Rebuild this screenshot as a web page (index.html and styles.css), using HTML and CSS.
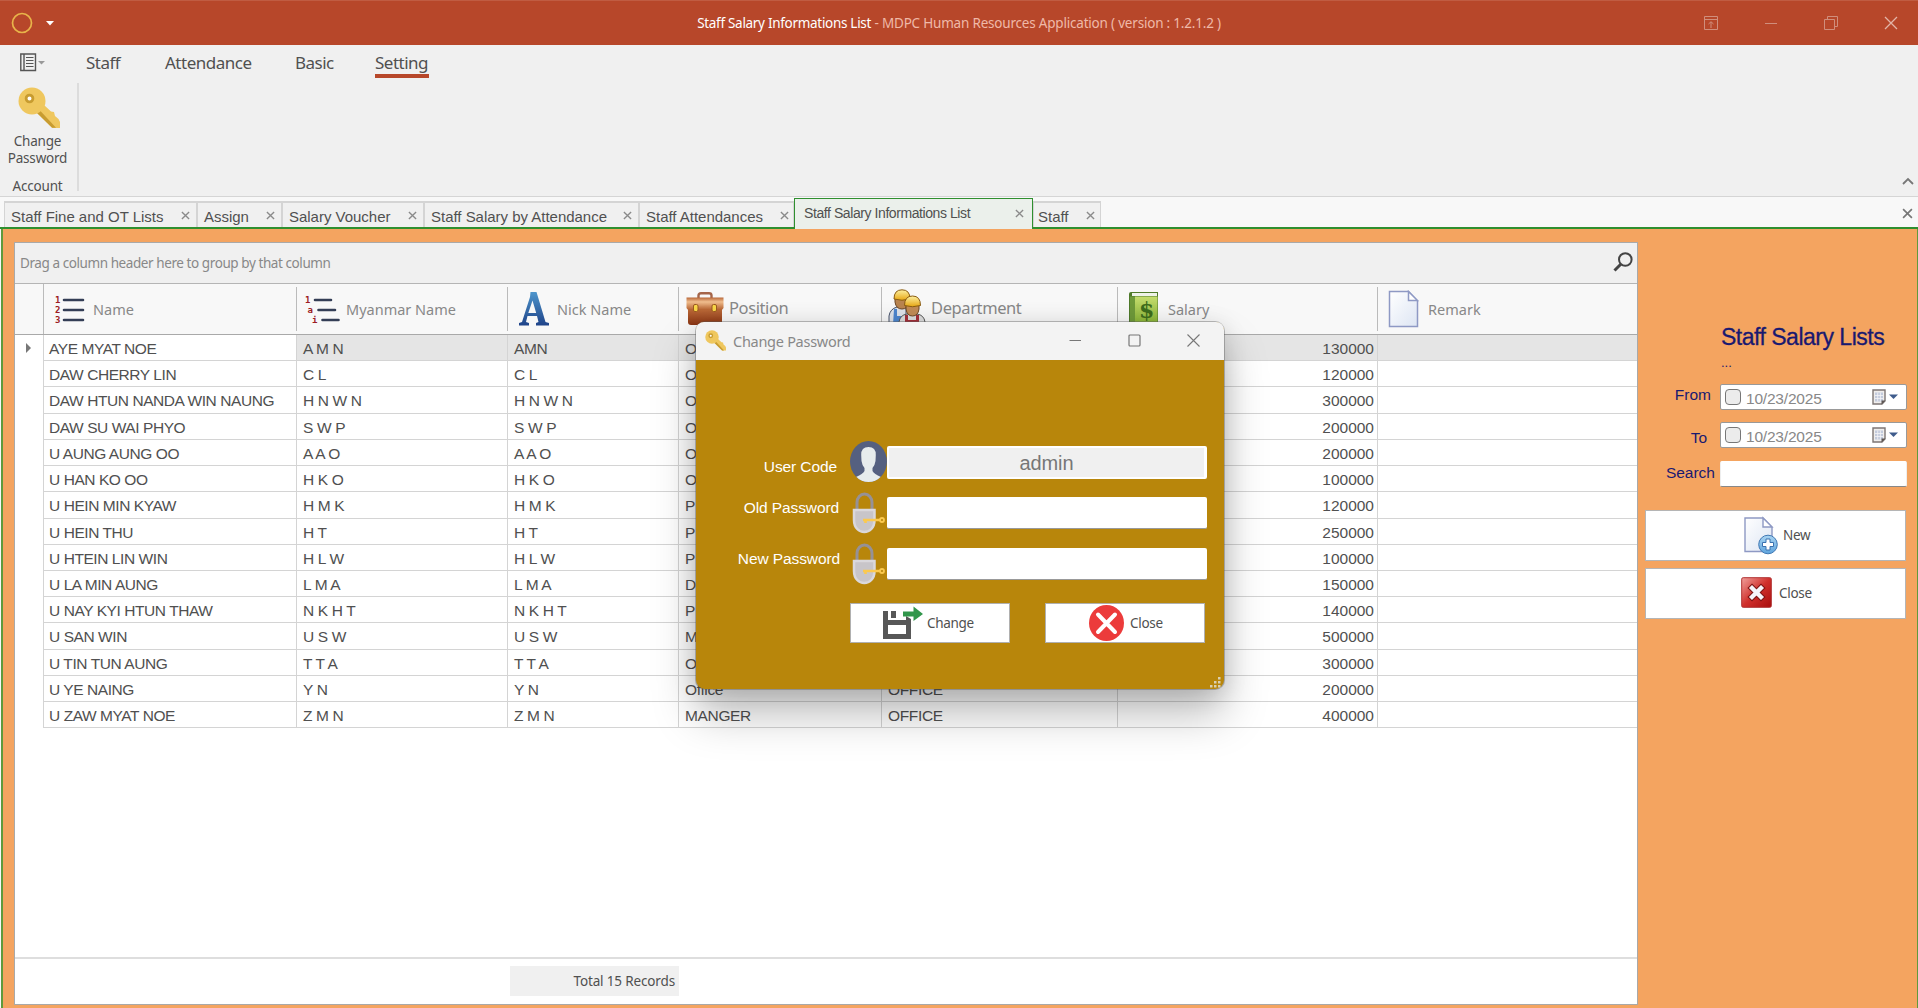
FILE: index.html
```html
<!DOCTYPE html>
<html lang="en">
<head>
<meta charset="utf-8">
<title>Staff Salary Informations List</title>
<link rel="stylesheet" href="styles.css">
</head>
<body>
<svg class="defs" width="0" height="0" aria-hidden="true">
  <defs>
    <linearGradient id="gBlue" x1="0" y1="0" x2="0" y2="1"><stop offset="0" stop-color="#4e96cc"/><stop offset="1" stop-color="#1f4389"/></linearGradient>
    <linearGradient id="gBag" x1="0" y1="0" x2="0" y2="1"><stop offset="0" stop-color="#c87843"/><stop offset="1" stop-color="#8a3413"/></linearGradient>
    <linearGradient id="gFlap" x1="0" y1="0" x2="0" y2="1"><stop offset="0" stop-color="#b9683a"/><stop offset=".35" stop-color="#f0bd8d"/><stop offset="1" stop-color="#b5612f"/></linearGradient>
    <linearGradient id="gHat" x1="0" y1="0" x2="0" y2="1"><stop offset="0" stop-color="#fdf0a0"/><stop offset="1" stop-color="#e7a714"/></linearGradient>
    <linearGradient id="gGreen" x1="0" y1="0" x2="0" y2="1"><stop offset="0" stop-color="#c5dc6e"/><stop offset="1" stop-color="#7fae2e"/></linearGradient>
    <linearGradient id="gDoc" x1="0" y1="0" x2="1" y2="1"><stop offset="0" stop-color="#ffffff"/><stop offset="1" stop-color="#dde5f3"/></linearGradient>
    <linearGradient id="gPlus" x1="0" y1="0" x2="0" y2="1"><stop offset="0" stop-color="#a9d4f2"/><stop offset="1" stop-color="#5fa4dc"/></linearGradient>
    <linearGradient id="gRed" x1="0" y1="0" x2="1" y2="1"><stop offset="0" stop-color="#f0a09c"/><stop offset=".5" stop-color="#d0302c"/><stop offset="1" stop-color="#a80c0c"/></linearGradient>
    <symbol id="key" viewBox="0 0 42 42">
      <path d="M20 23 26 18 33 24.5 36 25 37 29 40.5 32 42 35V41L34.500 41 19 26Z" fill="#efc75e"/>
      <path d="M19 26 22 23.500 38 40.800H34Z" fill="#c89c30"/>
      <circle cx="14" cy="14" r="13.500" fill="#efc75e"/>
      <circle cx="11.500" cy="11.500" r="3.400" fill="#fff" stroke="#c89c30" stroke-width="2.800"/>
    </symbol>
    <symbol id="x" viewBox="0 0 10 10"><path d="M1 1 9 9M9 1 1 9" fill="none" stroke="currentColor" stroke-width="1.500"/></symbol>
    <symbol id="lock" viewBox="0 0 33 42">
      <path d="M5 18V10.500A7.500 8.500 0 0 1 20 10.500V18" fill="none" stroke="#969196" stroke-width="3"/>
      <path d="M2 18H22.500V28C22.500 36 17.500 40 12.300 40S2 36 2 28Z" fill="#c8c5c9" stroke="#dad8dc" stroke-width="2.500"/>
      <path d="M11 28H28M13.500 28V31" fill="none" stroke="#fbc94f" stroke-width="2.600"/>
      <circle cx="30" cy="28" r="2" fill="none" stroke="#fbc94f" stroke-width="1.800"/>
    </symbol>
    <symbol id="doc" viewBox="0 0 31 38">
      <path d="M1.500 1.500H20.500L29.500 11V36.500H1.500Z" fill="url(#gDoc)" stroke="#8e99c4" stroke-width="1.500"/>
      <path d="M20.500 1.500V10.500H29.500Z" fill="#fff" stroke="#8e99c4" stroke-width="1.500"/>
    </symbol>
    <symbol id="cal" viewBox="0 0 26 16">
      <path d="M1 1H13V12L10 15H1Z" fill="#f0eeec" stroke="#7d7674" stroke-width="1.400"/>
      <path d="M3 3.500H11V12.500H3Z" fill="#c3cbdc"/>
      <path d="M3 6.500H11M3 9.500H11M5.700 3.500V12.500M8.400 3.500V12.500" fill="none" stroke="#f4f4f6" stroke-width=".8"/>
      <path d="M9.500 15.500V11.500H13.500Z" fill="#5d5654"/>
      <path d="M17 5.500H26L21.500 10Z" fill="#3f5c8c"/>
    </symbol>
  </defs>
</svg>

<header class="titlebar">
  <div class="quick">
    <svg width="22" height="22" viewBox="0 0 22 22"><circle cx="11" cy="11" r="9.500" fill="none" stroke="#e8b44a" stroke-width="1.700"/></svg>
    <svg width="8" height="5" viewBox="0 0 8 5"><path d="M0 0H8L4 4.500Z" fill="#fff"/></svg>
  </div>
  <div class="caption"><span class="doc-name">Staff Salary Informations List</span> <span class="app-name">- MDPC Human Resources Application ( version : 1.2.1.2 )</span></div>
  <div class="controls">
    <svg width="14" height="14" viewBox="0 0 14 14"><path d="M.5.5H13.500V13.500H.5ZM.5 3.500H13.500M7 12V6M4.500 8 7 5.700 9.500 8" fill="none" stroke="currentColor"/></svg>
    <svg width="14" height="14" viewBox="0 0 14 14"><path d="M1 7.500H13" stroke="currentColor"/></svg>
    <svg width="14" height="14" viewBox="0 0 14 14"><path d="M.5 3.500H10.500V13.500H.5ZM3.500 3.500V.5H13.500V10.500H10.500" fill="none" stroke="currentColor"/></svg>
    <svg class="bright" width="14" height="14" viewBox="0 0 14 14"><path d="M1 1 13 13M13 1 1 13" fill="none" stroke="currentColor" stroke-width="1.300"/></svg>
  </div>
</header>

<section class="ribbon">
  <nav class="ribbon-tabs">
    <svg class="file" width="26" height="19" viewBox="0 0 26 19"><path d="M.8 1H15.500V17.500H.8ZM4 1V17.500" fill="none" stroke="#555" stroke-width="1.400"/><path d="M6 4.500H13.500M6 7.500H13.500M6 10.500H13.500M6 13.500H13.500" stroke="#555" stroke-width="1.200"/><path d="M18 8H25L21.500 11.500Z" fill="#999"/></svg>
    <a class="t1">Staff</a><a class="t2">Attendance</a><a class="t3">Basic</a><a class="t4 on">Setting</a>
  </nav>
  <div class="ribbon-body">
    <div class="group">
      <svg width="42" height="42"><use href="#key"/></svg>
      <div class="cmd">Change<br>Password</div>
      <div class="gname">Account</div>
    </div>
    <svg class="collapse" width="12" height="8" viewBox="0 0 12 8"><path d="M1 7 6 2 11 7" fill="none" stroke="#777" stroke-width="1.800"/></svg>
  </div>
</section>

<nav class="tabs">
  <div class="tab w1"><span>Staff Fine and OT Lists</span><svg width="9" height="9"><use href="#x"/></svg></div>
  <div class="tab w2"><span>Assign</span><svg width="9" height="9"><use href="#x"/></svg></div>
  <div class="tab w3"><span>Salary Voucher</span><svg width="9" height="9"><use href="#x"/></svg></div>
  <div class="tab w4"><span>Staff Salary by Attendance</span><svg width="9" height="9"><use href="#x"/></svg></div>
  <div class="tab w5"><span>Staff Attendances</span><svg width="9" height="9"><use href="#x"/></svg></div>
  <div class="tab w6 active"><span>Staff Salary Informations List</span><svg width="9" height="9"><use href="#x"/></svg></div>
  <div class="tab w7"><span>Staff</span><svg width="9" height="9"><use href="#x"/></svg></div>
  <svg class="close-all" width="11" height="11"><use href="#x"/></svg>
</nav>

<main class="page">
  <section class="grid">
    <div class="group-panel"><span>Drag a column header here to group by that column</span>
      <svg width="20" height="20" viewBox="0 0 20 20"><circle cx="12.300" cy="7.500" r="6.300" fill="none" stroke="#444" stroke-width="2"/><path d="M8 12 1.500 18.500" stroke="#444" stroke-width="3"/></svg>
    </div>
    <div class="row head">
      <div class="ind"></div>
      <div class="h c-name"><svg width="32" height="30" viewBox="0 0 32 30"><g class="num"><text x="1" y="8.500">1</text><text x="1" y="18.500">2</text><text x="1" y="28.500">3</text></g><path d="M10 6H29M10 16H29M10 26H29" stroke="#343e56" stroke-width="2.600" stroke-linecap="round"/></svg><span>Name</span></div>
      <div class="h c-my"><svg width="36" height="30" viewBox="0 0 36 30"><g class="num"><text x="0" y="8.500">1</text><text x="2.500" y="18.500">a</text><text x="7" y="28.500">i</text></g><path d="M10 6H26M13.500 16H30M17.500 26H33.500" stroke="#343e56" stroke-width="2.600" stroke-linecap="round"/></svg><span>Myanmar Name</span></div>
      <div class="h c-nick"><svg width="32" height="36" viewBox="0 0 32 36"><path d="M12.500 1H18.500L27.500 31 31 32V34.500H18V32L20.500 31 19 25H9.500L8 31 11 32V34.500H1V32L4 31 12 6ZM14.500 9.500 10.300 22H18.200Z" fill="url(#gBlue)" fill-rule="evenodd"/></svg><span>Nick Name</span></div>
      <div class="h c-pos big"><svg width="38" height="34" viewBox="0 0 38 34"><path d="M12.500 6V3.500Q12.500 1.300 15 1.300H23Q25.500 1.300 25.500 3.500V6" fill="none" stroke="#a5654a" stroke-width="2.400"/><path d="M2 13H36V30Q36 33 33 33H5Q2 33 2 30Z" fill="url(#gBag)"/><path d="M.5 5.500H37.500V16Q37 18 34 18H4Q1 18 .5 16Z" fill="url(#gFlap)"/><rect x="7.500" y="12.500" width="4.500" height="7" rx="1.500" fill="#f9d648" stroke="#9a5a20"/><rect x="26" y="12.500" width="4.500" height="7" rx="1.500" fill="#f9d648" stroke="#9a5a20"/></svg><span>Position</span></div>
      <div class="h c-dep big"><svg width="38" height="40" viewBox="0 0 38 40"><path d="M1 36V27Q2 20 9 18H18V36Z" fill="#dfe3ea" stroke="#46536b"/><path d="M6 20H9V27H16V36H5Z" fill="#4d86cf"/><path d="M7 8H21V13Q20 20 14 20T7 13Z" fill="#b98450" stroke="#6d4522" stroke-width="1"/><path d="M6 10Q6 .8 14 .8T22 10Q14 12.500 6 10Z" fill="url(#gHat)" stroke="#8a5c12" stroke-width="1"/><path d="M11 40V33Q12 26 19 25H29Q36 26 37 33V40Z" fill="#ddd" stroke="#555"/><path d="M17 26H20V31H28V26H31V40H17Z" fill="#a5303a"/><path d="M18 15H31V20Q30 27 24.500 27T18 20Z" fill="#c28c56" stroke="#6d4522" stroke-width="1"/><path d="M16.500 16.500Q16.500 7 24.500 7T32.500 16.500Q24.500 19 16.500 16.500Z" fill="url(#gHat)" stroke="#8a5c12" stroke-width="1"/></svg><span>Department</span></div>
      <div class="h c-sal"><svg width="31" height="36" viewBox="0 0 31 36"><path d="M1 3Q1 1 3 1H30V36H1Z" fill="#4f7a2a"/><path d="M4 2H29V5H4Z" fill="#eef2e8"/><path d="M7 5.500H29.500V36H7Z" fill="url(#gGreen)"/><path d="M2 5.500H7V36H2Z" fill="#6f9a3a"/><text class="dollar" x="11" y="27">$</text></svg><span>Salary</span></div>
      <div class="h c-rem"><svg width="31" height="38"><use href="#doc"/></svg><span>Remark</span></div>
    </div>
    <div class="row sel"><i class="ind"><svg width="5" height="10" viewBox="0 0 5 10"><path d="M0 0 5 5 0 10Z" fill="#777"/></svg></i><b>AYE MYAT NOE</b><b>A M N</b><b>AMN</b><b>Office</b><b>OFFICE</b><b>130000</b><b></b></div>
    <div class="row"><i class="ind"></i><b>DAW CHERRY LIN</b><b>C L</b><b>C L</b><b>Office</b><b>OFFICE</b><b>120000</b><b></b></div>
    <div class="row"><i class="ind"></i><b>DAW HTUN NANDA WIN NAUNG</b><b>H N W N</b><b>H N W N</b><b>Office</b><b>OFFICE</b><b>300000</b><b></b></div>
    <div class="row"><i class="ind"></i><b>DAW SU WAI PHYO</b><b>S W P</b><b>S W P</b><b>Office</b><b>OFFICE</b><b>200000</b><b></b></div>
    <div class="row"><i class="ind"></i><b>U AUNG AUNG OO</b><b>A A O</b><b>A A O</b><b>Office</b><b>OFFICE</b><b>200000</b><b></b></div>
    <div class="row"><i class="ind"></i><b>U HAN KO OO</b><b>H K O</b><b>H K O</b><b>Office</b><b>OFFICE</b><b>100000</b><b></b></div>
    <div class="row"><i class="ind"></i><b>U HEIN MIN KYAW</b><b>H M K</b><b>H M K</b><b>P</b><b></b><b>120000</b><b></b></div>
    <div class="row"><i class="ind"></i><b>U HEIN THU</b><b>H T</b><b>H T</b><b>P</b><b></b><b>250000</b><b></b></div>
    <div class="row"><i class="ind"></i><b>U HTEIN LIN WIN</b><b>H L W</b><b>H L W</b><b>P</b><b></b><b>100000</b><b></b></div>
    <div class="row"><i class="ind"></i><b>U LA MIN AUNG</b><b>L M A</b><b>L M A</b><b>D</b><b></b><b>150000</b><b></b></div>
    <div class="row"><i class="ind"></i><b>U NAY KYI HTUN THAW</b><b>N K H T</b><b>N K H T</b><b>P</b><b></b><b>140000</b><b></b></div>
    <div class="row"><i class="ind"></i><b>U SAN WIN</b><b>U S W</b><b>U S W</b><b>M</b><b></b><b>500000</b><b></b></div>
    <div class="row"><i class="ind"></i><b>U TIN TUN AUNG</b><b>T T A</b><b>T T A</b><b>Office</b><b>OFFICE</b><b>300000</b><b></b></div>
    <div class="row"><i class="ind"></i><b>U YE NAING</b><b>Y N</b><b>Y N</b><b>Office</b><b>OFFICE</b><b>200000</b><b></b></div>
    <div class="row"><i class="ind"></i><b>U ZAW MYAT NOE</b><b>Z M N</b><b>Z M N</b><b>MANGER</b><b>OFFICE</b><b>400000</b><b></b></div>
    <footer class="summary"><span>Total 15 Records</span></footer>
  </section>

  <aside class="side">
    <h1>Staff Salary Lists</h1>
    <div class="dots">...</div>
    <div class="field f1"><label>From</label><div class="date"><i class="check"></i><span>10/23/2025</span><svg width="26" height="16"><use href="#cal"/></svg></div></div>
    <div class="field f2"><label>To</label><div class="date"><i class="check"></i><span>10/23/2025</span><svg width="26" height="16"><use href="#cal"/></svg></div></div>
    <div class="field f3"><label>Search</label><div class="search"></div></div>
    <div class="btn b1"><svg width="34" height="38" viewBox="0 0 34 38"><path d="M1 1H19L28 10V34.500H1Z" fill="url(#gDoc)" stroke="#8e99c4" stroke-width="1.400"/><path d="M19 1V10H28Z" fill="#fff" stroke="#8e99c4" stroke-width="1.400"/><circle cx="24" cy="27.500" r="9.300" fill="url(#gPlus)" stroke="#3f78b4"/><path d="M22 22H26V25.500H29.500V29.500H26V33H22V29.500H18.500V25.500H22Z" fill="#fff" stroke="#3a72b0"/></svg><span>New</span></div>
    <div class="btn b2"><svg width="31" height="31" viewBox="0 0 31 31"><rect x=".7" y=".7" width="29.600" height="29.600" rx="1.500" fill="url(#gRed)" stroke="#b03030" stroke-width="1"/><path d="M11 11 20 20M20 11 11 20" stroke="#7d1414" stroke-width="6.500" stroke-linecap="square"/><path d="M11 11 20 20M20 11 11 20" stroke="#f5f5fa" stroke-width="4.300" stroke-linecap="square"/></svg><span>Close</span></div>
  </aside>
</main>

<section class="dialog">
  <header class="dlg-title">
    <svg width="21" height="21"><use href="#key"/></svg><span>Change Password</span>
    <div class="dlg-ctl">
      <svg width="13" height="13" viewBox="0 0 13 13"><path d="M.5 6.500H12" stroke="#777"/></svg>
      <svg width="13" height="13" viewBox="0 0 13 13"><rect x="1" y="1" width="11" height="11" rx="1" fill="none" stroke="#777" stroke-width="1.200"/></svg>
      <svg width="13" height="13" viewBox="0 0 13 13"><path d="M.5.5 12.500 12.500M12.500.5.5 12.500" fill="none" stroke="#777" stroke-width="1.100"/></svg>
    </div>
  </header>
  <div class="dlg-body">
    <label class="l1">User Code</label>
    <svg width="37" height="41" viewBox="0 0 37 41" preserveAspectRatio="none"><defs><clipPath id="av"><ellipse cx="18.500" cy="20.500" rx="18.500" ry="20.500"/></clipPath></defs><g clip-path="url(#av)"><path d="M0 0H37V41H0Z" fill="#556080"/><path d="M18.500 6Q26 6 25.800 14L25.500 20Q25 24 22.500 27V30Q24 33 31 36L32 41H5L6 36Q13 33 14.500 30V27Q12 24 11.500 20L11.200 14Q11 6 18.500 6Z" fill="#e7eced"/></g></svg>
    <div class="inp ro">admin</div>
    <label class="l2">Old Password</label>
    <svg class="lk" width="33" height="42"><use href="#lock"/></svg>
    <div class="inp"></div>
    <label class="l3">New Password</label>
    <svg class="lk" width="33" height="42"><use href="#lock"/></svg>
    <div class="inp"></div>
  </div>
  <div class="dlg-actions">
    <div class="abtn"><svg width="40" height="34" viewBox="0 0 40 34"><path d="M0 5H5V14H23V10L28 13V33H0ZM5 19V28H23V19Z" fill="#575757" fill-rule="evenodd"/><path d="M8 5H13V12H8Z" fill="#575757"/><path d="M20 5.500H30.500V.5L40 8 30.500 15V10.500H20Z" fill="#31964b"/></svg><span>Change</span></div>
    <div class="abtn"><svg width="35" height="36" viewBox="0 0 35 36"><ellipse cx="17.500" cy="18" rx="17.500" ry="18" fill="#ec3b3b"/><path d="M9 9.500 26 27M26 9.500 9 27" stroke="#fff" stroke-width="4" stroke-linecap="round"/></svg><span>Close</span></div>
  </div>
  <svg class="grip" width="12" height="12" viewBox="0 0 12 12"><path d="M8 1h2.500v2.500H8ZM8 5h2.500v2.500H8ZM8 9h2.500v2.500H8ZM4 5h2.500v2.500H4ZM4 9h2.500v2.500H4ZM0 9h2.500v2.500H0Z" fill="#d9d0b4"/></svg>
</section>
</body>
</html>
```
FILE: styles.css
```css
* { box-sizing: border-box; }
body { margin: 0; width: 1918px; height: 1008px; overflow: hidden; position: relative; display: flex; flex-direction: column; background: #f8f8f8; font-family: "Liberation Sans", Arial, sans-serif; color: #505050; }
svg { display: block; flex: none; overflow: visible; }
.defs { position: absolute; }
span, label, a { white-space: nowrap; }

.titlebar { height: 45px; flex: none; background: #b7472a; border-top: 1px solid #c05c42; display: grid; grid-template-columns: 1fr auto 1fr; align-items: center; font-family: "Noto Sans", sans-serif; }
.quick { display: flex; align-items: center; gap: 13px; padding-left: 11px; }
.caption { font-size: 13.5px; letter-spacing: -.1px; color: #efb9a8; padding-bottom: 1px; }
.doc-name { color: #fff; letter-spacing: -.3px; }
.app-name { letter-spacing: -.2px; }
.controls { display: flex; justify-content: flex-end; gap: 46px; padding-right: 20px; color: #d08e7c; }
.bright { color: #e3b5a8; }

.ribbon { height: 152px; flex: none; background: #f0f0f0; border-bottom: 1px solid #d5d5d5; font-family: "Noto Sans", sans-serif; display: flex; flex-direction: column; }
.ribbon-tabs { height: 38px; display: flex; align-items: flex-start; font-size: 17px; letter-spacing: -.5px; }
.file { margin: 8px 0 0 20px; }
.ribbon-tabs a { margin-top: 5px; height: 28px; line-height: 25px; }
.t1 { margin-left: 40px; width: 79px; }
.t2 { width: 130px; }
.t3 { width: 80px; }
.t4.on { width: 54px; border-bottom: 4px solid #b7472a; }
.ribbon-body { flex: 1; display: flex; justify-content: space-between; align-items: flex-end; padding-bottom: 5px; }
.group { width: 79px; height: 108px; border-right: 2px solid #dcdcdc; display: flex; flex-direction: column; align-items: center; padding-top: 4px; font-size: 13.5px; letter-spacing: -.2px; }
.cmd { margin-top: 4px; line-height: 16.500px; text-align: center; padding-right: 2px; }
.gname { margin-top: 11px; line-height: 18px; padding-right: 2px; }
.collapse { margin: 0 4px 6px 0; }

.tabs { height: 32px; flex: none; display: flex; align-items: flex-end; padding-left: 4px; border-bottom: 2px solid #2f8f2f; position: relative; }
.tab { height: 26px; border: 1px solid #d4d4d4; border-width: 2px 1px 0; background: #f0f0f0; display: flex; align-items: center; justify-content: space-between; padding: 2px 6px 0 6px; font-size: 15px; letter-spacing: -.02px; }
.tab svg { color: #8a8a8a; margin-top: -2px; }
.w1 { width: 193px; } .w2 { width: 85px; padding-left: 6px; } .w3 { width: 142px; } .w4 { width: 215px; } .w5 { width: 155px; padding-right: 4px; }
.w6 { width: 239px; } .w7 { width: 68px; padding-left: 4px; padding-right: 5px; }
.tab.active { height: 31px; margin-bottom: -2px; border: 1px solid #2f8f2f; border-bottom: 0; background: #ebf0eb; font-size: 14px; letter-spacing: -.42px; padding: 0 8px 2px 9px; }
.tab.active svg { margin: 0; }
.close-all { margin: 0 5px 8px auto; color: #777; }

.page { flex: 1; display: flex; background: #f4a460; border: solid #5f9a3c; border-width: 0 1px 0 2px; margin-left: 1px; padding: 13px 11px 3px 11px; }
.grid { width: 1624px; flex: none; border: 1px solid #a9a9a9; background: #fff; display: flex; flex-direction: column; }
.group-panel { height: 41px; flex: none; background: #f0f0f0; border-bottom: 1px solid #b5b5b5; display: flex; align-items: center; justify-content: space-between; padding: 0 4px 0 5px; font: 13.500px "Noto Sans", sans-serif; letter-spacing: -.42px; color: #888; }
.group-panel svg { margin-top: -2px; }
.row { display: grid; grid-template-columns: 29px 253px 211px 171px 203px 236px 260px 1fr; height: 26.230px; flex: none; }
.row.head { height: 51px; background: #f8f8f8; border-bottom: 1px solid #a9a9a9; }
.h { display: flex; align-items: center; position: relative; font: 14.500px "Noto Sans", sans-serif; color: #888; border-right: 1px solid #bbb; margin: 3px 0; }
.h:last-child { border: 0; }
.h > svg, .h > span { margin-top: -1px; }
.h.big span { font-size: 16.500px; letter-spacing: -.4px; margin-top: -3px; }
.head .ind { border-right: 1px solid #bbb; }
.num text { font: bold 9px "DejaVu Sans Mono", monospace; fill: #9c1c24; }
.dollar { font: bold 22px "DejaVu Serif", serif; fill: #3e6d1d; }
.c-name { padding-left: 10px; gap: 7px; }
.c-my { padding-left: 8px; gap: 5px; }
.c-nick { padding-left: 10px; gap: 7px; }
.c-pos { padding-left: 7px; gap: 5px; }
.c-dep { padding-left: 6px; gap: 5px; }
.c-sal { padding-left: 10px; gap: 9px; }
.c-rem { padding-left: 10px; gap: 9px; }
.row b { font-weight: 400; font-size: 15.500px; letter-spacing: -.43px; white-space: nowrap; border: 1px solid #d4d4d4; border-width: 0 1px 1px 0; padding-left: 5px; line-height: 27px; overflow: hidden; }
.row b:nth-child(n+3) { padding-left: 6px; letter-spacing: -.35px; }
.row b:nth-child(7) { text-align: right; padding-right: 3px; letter-spacing: 0; }
.row b:last-child { border-right: 0; }
.row > i.ind { border-right: 1px solid #d4d4d4; display: flex; align-items: center; padding-left: 11px; }
.sel b { background: #e5e5e5; }
.sel b:nth-child(2) { background: #fff; }
.summary { margin-top: auto; height: 47px; border-top: 2px solid #dedede; padding: 7px 0 0 495px; font: 13.500px "Noto Sans", sans-serif; letter-spacing: -.15px; }
.summary span { display: block; width: 169px; height: 30px; line-height: 31px; background: #f0f0f0; text-align: right; padding-right: 4px; }

.side { flex: 1; padding-left: 7px; color: #191970; display: flex; flex-direction: column; }
.side h1 { margin: 80px 0 0 76px; font-size: 23px; line-height: 31px; height: 30px; font-weight: 400; letter-spacing: -.5px; white-space: nowrap; -webkit-text-stroke: .3px #191970; }
.dots { margin-left: 76px; font-size: 13px; line-height: 18px; height: 32px; padding-top: 2px; }
.field { display: flex; align-items: flex-start; font-size: 15.500px; }
.field label { text-align: right; line-height: 22px; }
.f1 { height: 38px; } .f2 { height: 39px; } .f3 { height: 49px; }
.f1 label { width: 66px; margin-right: 9px; } .f2 label { width: 62px; margin: 5px 13px 0 0; } .f3 label { width: 70px; margin: 1px 5px 0 0; }
.date, .search { width: 187px; height: 26px; background: #fff; border: 1px solid #999; border-radius: 2px; display: flex; align-items: center; padding: 0 8px 0 4px; color: #888; }
.date span { margin: 3px auto 0 5px; letter-spacing: -.2px; }
.search { border-color: #fff #eee #888; }
.check { width: 16px; height: 16px; border: 1.500px solid #777; border-radius: 4px; background: #ececec; }
.btn { width: 261px; height: 51px; flex: none; background: #fff; border: 1px solid #b5b5b5; display: flex; align-items: center; color: #505050; font: 13.500px "Noto Sans", sans-serif; letter-spacing: -.3px; }
.btn span, .abtn span { margin-top: -1px; }
.b1 { padding-left: 98px; gap: 5px; margin-bottom: 7px; }
.b2 { padding-left: 95px; gap: 7px; }
.b2 svg { margin-top: -2px; }

.dialog { position: absolute; left: 696px; top: 322px; width: 528px; height: 367px; border-radius: 9px; background: #b8860b; display: flex; flex-direction: column; overflow: visible; box-shadow: 0 0 0 1px rgba(90,90,90,.4), 0 26px 44px rgba(0,0,0,.25), 0 4px 24px rgba(0,0,0,.14); }
.dlg-title { height: 38px; flex: none; border-radius: 8px 8px 0 0; background: #f3f3f3; display: flex; align-items: center; gap: 7px; padding: 0 24px 1px 9px; font: 14.500px "Noto Sans", sans-serif; letter-spacing: -.28px; color: #888; }
.dlg-ctl { margin-left: auto; display: flex; gap: 46px; }
.dlg-body { padding: 81px 17px 0 0; display: grid; grid-template-columns: 154px 37px 1fr; grid-template-rows: 41px 42px 42px; row-gap: 9px; align-items: center; color: #fff; font-size: 15.500px; letter-spacing: -.1px; }
.dlg-body label { text-align: right; }
.l1 { padding: 10px 13px 0 0; } .l2 { padding: 0 11px 8px 0; } .l3 { padding: 0 10px 9px 0; }
.lk { margin: 2px 0 0 2px; }
.inp { height: 32px; margin-top: 2px; background: #fff; border-radius: 2px; border-bottom: 1px solid #999; }
.inp.ro { height: 33px; background: #f0f0f0; border: 2px solid #fff; border-right-width: 3px; color: #777; font: 20px/30px "Liberation Sans", sans-serif; text-align: center; }
.dlg-actions { display: flex; gap: 35px; padding: 19px 0 0 154px; }
.abtn { width: 160px; height: 40px; background: #fff; border: 1px solid #b0b0b0; display: flex; align-items: center; gap: 4px; padding-left: 32px; font: 13.500px "Noto Sans", sans-serif; letter-spacing: -.3px; }
.abtn + .abtn { padding-left: 43px; gap: 6px; }
.grip { position: absolute; right: 2px; bottom: 1px; }
```
